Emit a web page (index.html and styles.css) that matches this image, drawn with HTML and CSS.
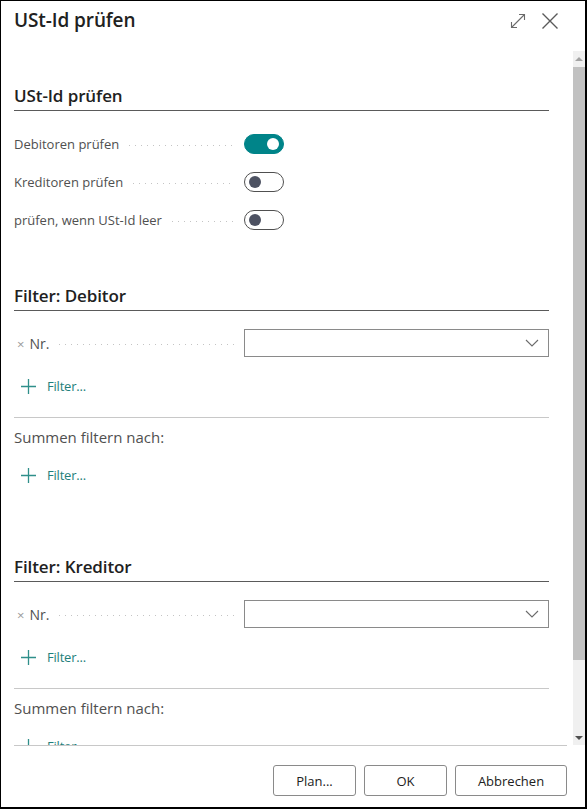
FILE: index.html
```html
<!DOCTYPE html>
<html lang="de">
<head>
<meta charset="utf-8">
<title>USt-Id prüfen</title>
<link rel="stylesheet" href="styles.css">
</head>
<body>
<div class="dialog">
  <header class="dlg-header">
    <h1 class="dlg-title">USt-Id prüfen</h1>
    <div class="dlg-actions">
      <svg class="icon-expand" width="16" height="16" viewBox="0 0 16 16" fill="none" stroke="#6b6b6b" stroke-width="1.1">
        <path d="M1.5 14.5 L14.5 1.5"/>
        <path d="M9 1.5 H14.5 V7"/>
        <path d="M1.5 9 V14.5 H7"/>
      </svg>
      <svg class="icon-close" width="18" height="18" viewBox="0 0 18 18" fill="none" stroke="#5a5a5a" stroke-width="1.4">
        <path d="M1.5 1.5 L16.5 16.5 M16.5 1.5 L1.5 16.5"/>
      </svg>
    </div>
  </header>

  <div class="dlg-body">
    <div class="content">
      <section class="group first">
        <h2 class="group-title">USt-Id prüfen</h2>
        <div class="field-row">
          <span class="label">Debitoren prüfen</span><span class="leader"></span>
          <span class="toggle on"><span class="knob"></span></span>
        </div>
        <div class="field-row">
          <span class="label">Kreditoren prüfen</span><span class="leader"></span>
          <span class="toggle"><span class="knob"></span></span>
        </div>
        <div class="field-row">
          <span class="label">prüfen, wenn USt-Id leer</span><span class="leader"></span>
          <span class="toggle"><span class="knob"></span></span>
        </div>
      </section>

      <section class="group filter-group">
        <h2 class="group-title">Filter: Debitor</h2>
        <div class="field-row nr-row">
          <span class="label nr"><span class="x">×</span>Nr.</span><span class="leader"></span>
          <span class="select"><svg width="14" height="8" viewBox="0 0 14 8" fill="none" stroke="#6b6b6b" stroke-width="1.1"><path d="M1 1 L7 7 L13 1"/></svg></span>
        </div>
        <div class="add-filter tall"><svg class="plus" width="15" height="15" viewBox="0 0 15 15" stroke="#2f8f8a" stroke-width="1.3"><path d="M7.5 0 V15 M0 7.5 H15"/></svg><span>Filter...</span></div>
        <div class="sep"></div>
        <div class="sum-label">Summen filtern nach:</div>
        <div class="add-filter"><svg class="plus" width="15" height="15" viewBox="0 0 15 15" stroke="#2f8f8a" stroke-width="1.3"><path d="M7.5 0 V15 M0 7.5 H15"/></svg><span>Filter...</span></div>
      </section>

      <section class="group filter-group second">
        <h2 class="group-title">Filter: Kreditor</h2>
        <div class="field-row nr-row">
          <span class="label nr"><span class="x">×</span>Nr.</span><span class="leader"></span>
          <span class="select"><svg width="14" height="8" viewBox="0 0 14 8" fill="none" stroke="#6b6b6b" stroke-width="1.1"><path d="M1 1 L7 7 L13 1"/></svg></span>
        </div>
        <div class="add-filter tall"><svg class="plus" width="15" height="15" viewBox="0 0 15 15" stroke="#2f8f8a" stroke-width="1.3"><path d="M7.5 0 V15 M0 7.5 H15"/></svg><span>Filter...</span></div>
        <div class="sep"></div>
        <div class="sum-label">Summen filtern nach:</div>
        <div class="add-filter"><svg class="plus" width="15" height="15" viewBox="0 0 15 15" stroke="#2f8f8a" stroke-width="1.3"><path d="M7.5 0 V15 M0 7.5 H15"/></svg><span>Filter...</span></div>
      </section>
    </div>
    <div class="scrollbar">
      <div class="arrow up"></div>
      <div class="thumb"></div>
      <div class="track-rest"></div>
      <div class="arrow down"></div>
    </div>
  </div>

  <footer class="dlg-footer">
    <button class="btn btn-plan">Plan...</button>
    <button class="btn btn-ok">OK</button>
    <button class="btn btn-cancel">Abbrechen</button>
  </footer>
</div>
</body>
</html>
```

FILE: styles.css
```css
* { box-sizing: border-box; }
html, body { margin: 0; padding: 0; background: #fff; }
body {
  font-family: "Open Sans", "Noto Sans", "Liberation Sans", sans-serif;
  color: #212121;
}
.dialog {
  width: 587px;
  height: 809px;
  border-top: 1px solid #000;
  border-left: 1px solid #000;
  border-right: 2px solid #000;
  border-bottom: 2px solid #000;
  display: flex;
  flex-direction: column;
  background: #fff;
}
.dlg-header {
  height: 50px;
  flex: none;
  display: flex;
  align-items: flex-start;
  justify-content: space-between;
  padding: 6px 26px 0 13px;
}
.dlg-title {
  margin: 0;
  font-size: 19px;
  font-weight: 600;
  line-height: 26px;
  color: #212121;
  letter-spacing: -0.1px;
}
.dlg-actions {
  display: flex;
  align-items: center;
  gap: 15px;
  padding-top: 5px;
}

.dlg-body {
  height: 694px;
  flex: none;
  display: flex;
  overflow: hidden;
}
.content {
  flex: 1;
  padding: 31px 24px 0 13px;
  overflow: hidden;
}
.scrollbar {
  width: 12px;
  flex: none;
  background: #f0f0f0;
  display: flex;
  flex-direction: column;
}
.arrow { height: 16px; flex: none; position: relative; }
.arrow::after {
  content: "";
  position: absolute;
  left: 2px;
  width: 0; height: 0;
  border-left: 4px solid transparent;
  border-right: 4px solid transparent;
}
.arrow.up::after { top: 6px; border-bottom: 4px solid #a3a3a3; }
.arrow.down::after { top: 7px; border-top: 4px solid #505050; }
.thumb { height: 593px; flex: none; background: #c1c1c1; }
.track-rest { flex: 1; }

.group-title {
  margin: 0;
  height: 29px;
  line-height: 28px;
  font-size: 17px;
  font-weight: 600;
  color: #212121;
  border-bottom: 1px solid #5a5a5a;
  letter-spacing: -0.1px;
}
.group.first .group-title + .field-row { margin-top: 14px; }
.filter-group { margin-top: 43px; }
.filter-group.second { margin-top: 59px; }

.field-row {
  height: 38px;
  display: flex;
  align-items: center;
}
.nr-row { margin-top: 13px; }
.label {
  font-size: 13px;
  color: #505050;
  white-space: nowrap;
  flex: none;
}
.label.nr { font-size: 14px; padding-left: 3px; }
.x { color: #9a9a9a; margin-right: 5px; font-size: 13px; }
.leader {
  flex: 1;
  height: 2px;
  margin: 3px 9px 0 10px;
  background-image: linear-gradient(to right, #c4c4c4 1px, transparent 1px);
  background-size: 6px 1px;
  background-repeat: repeat-x;
}
.toggle {
  width: 40px;
  height: 20px;
  flex: none;
  margin-right: 265px;
  border-radius: 10px;
  border: 1px solid #505050;
  position: relative;
  display: block;
}
.toggle .knob {
  position: absolute;
  top: 3px;
  left: 4px;
  width: 12px;
  height: 12px;
  border-radius: 50%;
  background: #4d5262;
}
.toggle.on { background: #008489; border-color: #008489; }
.toggle.on .knob { left: auto; right: 4px; background: #fff; }

.select {
  width: 305px;
  height: 28px;
  flex: none;
  border: 1px solid #8a8a8a;
  display: flex;
  align-items: center;
  justify-content: flex-end;
  padding-right: 9px;
}

.add-filter {
  height: 38px;
  display: flex;
  align-items: center;
  padding-left: 7px;
  font-size: 13px;
  color: #1f7f7b;
  letter-spacing: -0.2px;
}
.add-filter.tall { height: 48px; }
.plus { margin-right: 11px; flex: none; }
.sep {
  margin-top: 7px;
  height: 1px;
  background: #c8c8c8;
}
.sum-label {
  height: 38px;
  line-height: 38px;
  font-size: 15px;
  color: #505050;
}

.dlg-footer {
  flex: 1;
  margin: 0 18px 0 13px;
  border-top: 1px solid #c8c8c8;
  display: flex;
  justify-content: flex-end;
  align-items: flex-start;
  padding-top: 19px;
  gap: 8px;
}
.btn {
  height: 31px;
  font-family: inherit;
  font-size: 13px;
  color: #212121;
  background: #fff;
  border: 1px solid #8a8a8a;
  border-radius: 3px;
  padding: 0;
}
.btn-plan { width: 83px; }
.btn-ok { width: 83px; }
.btn-cancel { width: 112px; }
```
